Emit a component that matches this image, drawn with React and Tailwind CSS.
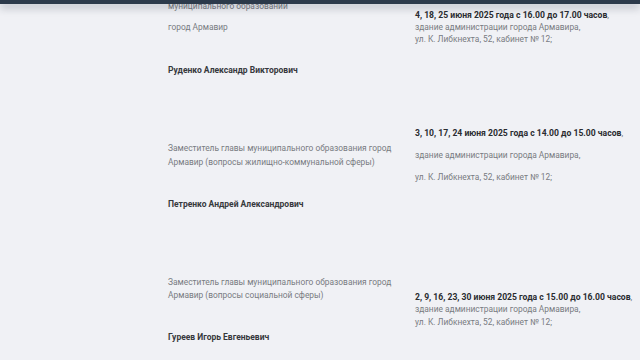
import React from 'react'

const rows = [
  {
    h: 'h-[126px]',
    leftPad: 'pt-0',
    rightPad: 'pt-[9px]',
    post: ['муниципального образовании', 'город Армавир'],
    postClass: 'leading-[13px]',
    postGap: 'mt-[8px]',
    name: 'Руденко Александр Викторович',
    nameGap: 'mt-[30px]',
    date: '4, 18, 25 июня 2025 года с 16.00 до 17.00 часов',
    place: ['здание администрации города Армавира,', 'ул. К. Либкнехта, 52, кабинет № 12;'],
    rightLeading: 'leading-[12px]',
    rightGap: 'mt-0',
  },
  {
    h: 'h-[149px]',
    leftPad: 'pt-[15px]',
    rightPad: 'pt-[0.5px]',
    post: ['Заместитель главы муниципального образования город Армавир (вопросы жилищно-коммунальной сферы)'],
    postClass: 'leading-[14px]',
    postGap: 'mt-0',
    name: 'Петренко Андрей Александрович',
    nameGap: 'mt-[29px]',
    date: '3, 10, 17, 24 июня 2025 года с 14.00 до 15.00 часов',
    place: ['здание администрации города Армавира,', 'ул. К. Либкнехта, 52, кабинет № 12;'],
    rightLeading: 'leading-[13px]',
    rightGap: 'mt-[9px]',
  },
  {
    h: 'h-[90px]',
    leftPad: 'pt-[0.5px]',
    rightPad: 'pt-[15.5px]',
    post: ['Заместитель главы муниципального образования город Армавир (вопросы социальной сферы)'],
    postClass: 'leading-[13px]',
    postGap: 'mt-0',
    name: 'Гуреев Игорь Евгеньевич',
    nameGap: 'mt-[29px]',
    date: '2, 9, 16, 23, 30 июня 2025 года с 15.00 до 16.00 часов',
    place: ['здание администрации города Армавира,', 'ул. К. Либкнехта, 52, кабинет № 12;'],
    rightLeading: 'leading-[12.5px]',
    rightGap: 'mt-0',
  },
]

export default function App() {
  return (
    <div className="relative w-[640px] h-[360px] overflow-hidden bg-[#f0f1f5] font-['Roboto',sans-serif] text-[8.4px]">
      {/* fixed site header, scrolled almost out of view */}
      <div className="absolute top-0 left-0 right-0 z-10 h-[4px] bg-[#2c3a4a] shadow-[0_3px_8px_rgba(35,45,60,0.4)]" />

      <div className="pl-[168px]">
        {rows.map((r) => (
          <div key={r.name} className={`grid grid-cols-[247px_225px] ${r.h}`}>
            <div className={r.leftPad}>
              {r.post.map((line, i) => (
                <p
                  key={i}
                  className={`w-[232px] text-[#787b81] ${r.postClass} ${i > 0 ? r.postGap : ''}`}
                >
                  {line}
                </p>
              ))}
              <p className={`leading-[13px] text-[8.5px] font-bold text-[#36383c] ${r.nameGap}`}>{r.name}</p>
            </div>
            <div className={`${r.rightPad} whitespace-nowrap`}>
              <p className={r.rightLeading}>
                <span className="font-bold text-[8.6px] text-[#2a2c30]">{r.date}</span>
                <span className="text-[#787b81]">,</span>
              </p>
              {r.place.map((line, i) => (
                <p key={i} className={`text-[#787b81] ${r.rightLeading} ${r.rightGap}`}>
                  {line}
                </p>
              ))}
            </div>
          </div>
        ))}
      </div>
    </div>
  )
}
